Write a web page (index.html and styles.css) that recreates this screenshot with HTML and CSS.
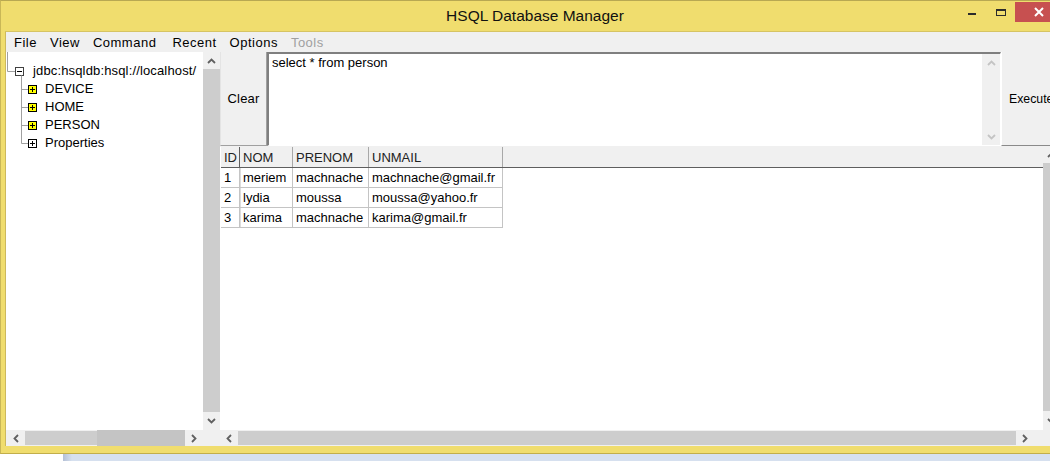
FILE: index.html
```html
<!DOCTYPE html>
<html>
<head>
<meta charset="utf-8">
<title>HSQL Database Manager</title>
<link rel="stylesheet" href="styles.css">
</head>
<body>
<div class="window">
  <div class="titlebar">
    <div class="title">HSQL Database Manager</div>
    <div class="wbtns">
      <div class="wb wb-min"><svg width="22" height="20" viewBox="0 0 22 20"><rect x="7" y="12" width="8" height="2" fill="#2b2b2b"/></svg></div>
      <div class="wb wb-max"><svg width="22" height="20" viewBox="0 0 22 20"><rect x="6.5" y="8.5" width="9" height="6" fill="none" stroke="#2b2b2b" stroke-width="1"/><rect x="6" y="8" width="10" height="2" fill="#2b2b2b"/></svg></div>
      <div class="wb wb-close"><svg width="47" height="20" viewBox="0 0 47 20"><path d="M20 6 L28 14 M28 6 L20 14" stroke="#fff" stroke-width="2" fill="none"/></svg></div>
    </div>
  </div>
  <div class="client">
    <div class="menubar">
      <span class="mi">File</span>
      <span class="mi">View</span>
      <span class="mi mi-wide">Command</span>
      <span class="mi">Recent</span>
      <span class="mi">Options</span>
      <span class="mi mi-dis">Tools</span>
    </div>
    <div class="main">
      <div class="left">
        <div class="left-top">
          <div class="tree">
            <div class="trow">
              <svg class="tsvg" width="27" height="18" viewBox="0 0 27 18">
                <path d="M1.5 -10 V9.5 H9" stroke="#a0a0a0" fill="none"/>
                <rect x="9.5" y="5.5" width="8" height="8" fill="#fff" stroke="#404040"/>
                <path d="M11 9.5 H16" stroke="#000"/>
                <path d="M15.5 13.5 V18" stroke="#a0a0a0"/>
              </svg>
              <span class="tlabel tlabel-root">jdbc:hsqldb:hsql://localhost/</span>
            </div>
            <div class="trow">
              <svg class="tsvg" width="39" height="18" viewBox="0 0 39 18">
                <path d="M15.5 0 V18 M15.5 9.5 H22" stroke="#a0a0a0" fill="none"/>
                <rect x="22.5" y="5.5" width="8" height="8" fill="#ffff00" stroke="#000"/>
                <path d="M24 9.5 H29 M26.5 7 V12" stroke="#000"/>
              </svg>
              <span class="tlabel">DEVICE</span>
            </div>
            <div class="trow">
              <svg class="tsvg" width="39" height="18" viewBox="0 0 39 18">
                <path d="M15.5 0 V18 M15.5 9.5 H22" stroke="#a0a0a0" fill="none"/>
                <rect x="22.5" y="5.5" width="8" height="8" fill="#ffff00" stroke="#000"/>
                <path d="M24 9.5 H29 M26.5 7 V12" stroke="#000"/>
              </svg>
              <span class="tlabel">HOME</span>
            </div>
            <div class="trow">
              <svg class="tsvg" width="39" height="18" viewBox="0 0 39 18">
                <path d="M15.5 0 V18 M15.5 9.5 H22" stroke="#a0a0a0" fill="none"/>
                <rect x="22.5" y="5.5" width="8" height="8" fill="#ffff00" stroke="#000"/>
                <path d="M24 9.5 H29 M26.5 7 V12" stroke="#000"/>
              </svg>
              <span class="tlabel">PERSON</span>
            </div>
            <div class="trow">
              <svg class="tsvg" width="39" height="18" viewBox="0 0 39 18">
                <path d="M15.5 0 V9.5 H22" stroke="#a0a0a0" fill="none"/>
                <rect x="22.5" y="5.5" width="8" height="8" fill="#fff" stroke="#000"/>
                <path d="M24 9.5 H29 M26.5 7 V12" stroke="#000"/>
              </svg>
              <span class="tlabel">Properties</span>
            </div>
          </div>
          <div class="vbar">
            <div class="sbtn sbtn-up17"><svg width="9" height="6" viewBox="0 0 9 6"><path d="M1 5 L4.5 1.5 L8 5" fill="none" stroke="#606060" stroke-width="1.8"/></svg></div>
            <div class="vtrack"></div>
            <div class="sbtn sbtn-dn18"><svg width="9" height="6" viewBox="0 0 9 6"><path d="M1 1 L4.5 4.5 L8 1" fill="none" stroke="#606060" stroke-width="1.8"/></svg></div>
          </div>
        </div>
        <div class="hbar">
          <div class="sbtn hb-l"><svg width="6" height="9" viewBox="0 0 6 9"><path d="M5 1 L1.5 4.5 L5 8" fill="none" stroke="#606060" stroke-width="1.8"/></svg></div>
          <div class="htrack htrack-l"></div>
          <div class="hthumb"></div>
          <div class="sbtn hb-r"><svg width="6" height="9" viewBox="0 0 6 9"><path d="M1 1 L4.5 4.5 L1 8" fill="none" stroke="#606060" stroke-width="1.8"/></svg></div>
          <div class="corner"></div>
        </div>
      </div>
      <div class="right">
        <div class="top">
          <div class="btn-clear">Clear</div>
          <div class="ta">
            <div class="ta-text">select * from person</div>
            <div class="ta-vs">
              <div class="ta-sb"><svg width="9" height="6" viewBox="0 0 9 6"><path d="M1 5 L4.5 1.5 L8 5" fill="none" stroke="#c4c4c4" stroke-width="1.8"/></svg></div>
              <div class="ta-sp"></div>
              <div class="ta-sb"><svg width="9" height="6" viewBox="0 0 9 6"><path d="M1 1 L4.5 4.5 L8 1" fill="none" stroke="#c4c4c4" stroke-width="1.8"/></svg></div>
            </div>
          </div>
          <div class="btn-exec">Execute</div>
        </div>
        <div class="results">
          <div class="grid">
            <div class="thead">
              <div class="th c-id th-dark">ID</div>
              <div class="th c-nom">NOM</div>
              <div class="th c-pre">PRENOM</div>
              <div class="th c-mail">UNMAIL</div>
            </div>
            <div class="tr">
              <div class="td c-id">1</div>
              <div class="td c-nom td-sh">meriem</div>
              <div class="td c-pre">machnache</div>
              <div class="td c-mail">machnache@gmail.fr</div>
            </div>
            <div class="tr">
              <div class="td c-id">2</div>
              <div class="td c-nom td-sh">lydia</div>
              <div class="td c-pre">moussa</div>
              <div class="td c-mail">moussa@yahoo.fr</div>
            </div>
            <div class="tr">
              <div class="td c-id">3</div>
              <div class="td c-nom td-sh">karima</div>
              <div class="td c-pre">machnache</div>
              <div class="td c-mail">karima@gmail.fr</div>
            </div>
          </div>
          <div class="vbar2">
            <div class="sbtn sbtn-up16"><svg width="9" height="6" viewBox="0 0 9 6"><path d="M1 5 L4.5 1.5 L8 5" fill="none" stroke="#606060" stroke-width="1.8"/></svg></div>
            <div class="vtrack"></div>
            <div class="sbtn sbtn-dn19"><svg width="9" height="6" viewBox="0 0 9 6"><path d="M1 1 L4.5 4.5 L8 1" fill="none" stroke="#606060" stroke-width="1.8"/></svg></div>
          </div>
        </div>
        <div class="hbar2">
          <div class="sbtn hb2-l"><svg width="6" height="9" viewBox="0 0 6 9"><path d="M5 1 L1.5 4.5 L5 8" fill="none" stroke="#606060" stroke-width="1.8"/></svg></div>
          <div class="htrack htrack-r"></div>
          <div class="sbtn hb2-r"><svg width="6" height="9" viewBox="0 0 6 9"><path d="M1 1 L4.5 4.5 L1 8" fill="none" stroke="#606060" stroke-width="1.8"/></svg></div>
          <div class="corner"></div>
        </div>
      </div>
    </div>
  </div>
</div>
<div class="desk">
  <div class="d-white"></div>
  <div class="d-grad"></div>
  <div class="d-blue"></div>
</div>
</body>
</html>
```
FILE: styles.css
```css
html, body {
  margin: 0;
  padding: 0;
}
body {
  width: 1050px;
  height: 461px;
  overflow: hidden;
  background: #d6e0ef;
  font-family: "Liberation Sans", Arial, sans-serif;
  color: #000;
}
.window {
  width: 1050px;
  height: 454px;
  box-sizing: border-box;
  background: #f0dd6e;
  border-top: 1px solid #b8a852;
  border-left: 1px solid #c9b757;
  border-bottom: 1px solid #c2ae4a;
  display: flex;
  flex-direction: column;
  overflow: hidden;
}
.titlebar {
  width: 1061px;
  height: 30px;
  flex: 0 0 30px;
  display: flex;
  align-items: flex-start;
}
.title {
  flex: 1;
  padding-left: 108px;
  text-align: center;
  line-height: 30px;
  font-size: 15.5px;
  color: #111;
}
.wbtns {
  flex: 0 0 101px;
  display: flex;
  align-items: flex-start;
}
.wb { height: 20px; }
.wb svg { display: block; }
.wb-min { width: 22px; }
.wb-max { width: 22px; margin-left: 7px; }
.wb-close {
  width: 47px;
  margin-left: 3px;
  margin-top: 1px;
  background: #c75050;
}
.client {
  flex: 1;
  min-height: 0;
  margin-left: 4px;
  margin-bottom: 7px;
  border-top: 1px solid #d6c463;
  border-left: 1px solid #cdb95c;
  background: #f0f0f0;
  display: flex;
  flex-direction: column;
  overflow: hidden;
}
.menubar {
  height: 20px;
  flex: 0 0 20px;
  display: flex;
  align-items: center;
  padding-left: 8px;
  gap: 13px;
  font-size: 13px;
  letter-spacing: 0.5px;
}
.mi-wide { margin-right: 3px; }
.mi-dis { color: #a0a0a0; }
.main {
  height: 394px;
  flex: 0 0 394px;
  display: flex;
}
.left {
  flex: 0 0 214px;
  display: flex;
  flex-direction: column;
}
.left-top {
  height: 378px;
  display: flex;
}
.tree {
  flex: 0 0 197px;
  background: #fff;
  padding-top: 10px;
  box-sizing: border-box;
  font-size: 13px;
  overflow: hidden;
}
.trow {
  height: 18px;
  display: flex;
  align-items: center;
  white-space: nowrap;
}
.tsvg {
  display: block;
  overflow: visible;
  flex: 0 0 auto;
}
.tlabel { line-height: 18px; }
.tlabel-root { letter-spacing: 0.15px; }
.vbar, .vbar2 {
  flex: 0 0 17px;
  display: flex;
  flex-direction: column;
}
.sbtn {
  background: #f0f0f0;
  display: flex;
  align-items: center;
  justify-content: center;
  flex: 0 0 auto;
}
.sbtn svg { display: block; }
.sbtn-up17 { height: 17px; }
.sbtn-dn18 { height: 18px; }
.sbtn-up16 { height: 16px; }
.sbtn-dn19 { height: 19px; }
.vtrack {
  flex: 1;
  background: #cdcdcd;
}
.hbar, .hbar2 {
  height: 16px;
  flex: 0 0 16px;
  display: flex;
}
.hb-l { width: 19px; }
.hb-r { width: 18px; }
.hb2-l { width: 18px; }
.hb2-r { width: 17px; }
.htrack {
  background: #cdcdcd;
  margin: 1px 0;
}
.htrack-l { width: 72px; }
.htrack-r { width: 788px; }
.hthumb {
  width: 88px;
  background: #c4c4c4;
}
.corner {
  width: 17px;
  flex: 0 0 17px;
  background: #f0f0f0;
}
.right {
  flex: 0 0 830px;
  min-width: 0;
  display: flex;
  flex-direction: column;
  overflow: hidden;
}
.top {
  height: 94px;
  flex: 0 0 94px;
  display: flex;
  margin-bottom: 1px;
}
.btn-clear {
  flex: 0 0 47px;
  box-sizing: border-box;
  border-left: 1px solid #e4e4e4;
  border-right: 1px solid #a0a0a0;
  border-bottom: 1px solid #a0a0a0;
  background: #f0f0f0;
  display: flex;
  align-items: center;
  justify-content: center;
  font-size: 13px;
  letter-spacing: 0.2px;
}
.ta {
  flex: 0 0 734px;
  box-sizing: border-box;
  border-top: 2px solid #7f7f7f;
  border-left: 2px solid #7f7f7f;
  border-right: 1px solid #fff;
  border-bottom: 1px solid #fff;
  background: #fff;
  display: flex;
}
.ta-text {
  flex: 1;
  padding: 1px 3px;
  font-size: 13px;
  line-height: 15px;
  white-space: nowrap;
}
.ta-vs {
  flex: 0 0 18px;
  background: #f0f0f0;
  display: flex;
  flex-direction: column;
}
.ta-sb {
  height: 17px;
  display: flex;
  align-items: center;
  justify-content: center;
}
.ta-sb svg { display: block; }
.ta-sp { flex: 1; }
.btn-exec {
  flex: 0 0 70px;
  box-sizing: border-box;
  border-left: 1px solid #fff;
  border-bottom: 1px solid #8a8a8a;
  background: #f0f0f0;
  padding-left: 7px;
  display: flex;
  align-items: center;
  font-size: 12.3px;
  white-space: nowrap;
}
.results {
  height: 283px;
  flex: 0 0 283px;
  display: flex;
}
.grid {
  flex: 0 0 823px;
  box-sizing: border-box;
  padding-left: 1px;
  background: #fff;
  font-size: 13px;
}
.thead {
  height: 21px;
  box-sizing: border-box;
  display: flex;
  background: #f0f0f0;
  border-bottom: 1px solid #5e5e5e;
  color: #222;
}
.tr {
  height: 20px;
  display: flex;
}
.th, .td {
  box-sizing: border-box;
  padding-left: 3px;
  white-space: nowrap;
  overflow: hidden;
  display: flex;
  align-items: center;
}
.th { border-right: 1px solid #a8a8a8; }
.th-dark { border-right: 1px solid #5e5e5e; }
.td {
  border-right: 1px solid #c4c4c4;
  border-bottom: 1px solid #c4c4c4;
}
.td-sh { box-shadow: inset 1px 0 0 #dcdcdc; }
.c-id { width: 19px; }
.c-nom { width: 53px; }
.c-pre { width: 76px; }
.c-mail { width: 134px; }
.desk {
  height: 7px;
  display: flex;
}
.d-white { width: 63px; background: #fff; }
.d-grad { width: 9px; background: linear-gradient(to right, #b4c0d6, #d6e0ef); }
.d-blue { flex: 1; background: #d6e0ef; }
```
